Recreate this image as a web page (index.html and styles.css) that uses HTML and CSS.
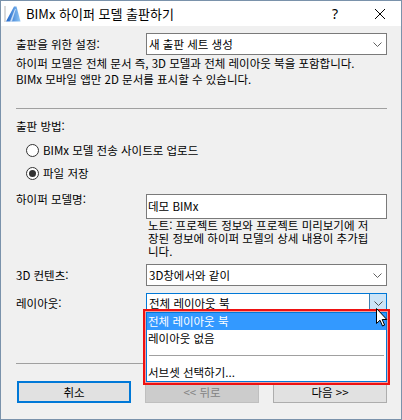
FILE: index.html
```html
<!DOCTYPE html>
<html lang="ko">
<head>
<meta charset="utf-8">
<title>BIMx 하이퍼 모델 출판하기</title>
<link rel="stylesheet" href="styles.css">
</head>
<body>
<div class="window">
  <div class="titlebar">
    <svg class="app-icon" viewBox="0 0 17 16" width="17" height="16">
      <defs>
        <linearGradient id="sail" x1="0" y1="0" x2="1" y2="0">
          <stop offset="0" stop-color="#1c63c9"/>
          <stop offset="1" stop-color="#8fc6f4"/>
        </linearGradient>
      </defs>
      <rect x="0" y="0" width="2" height="16" fill="#d9d9d9"/>
      <path d="M2 15.5 L10 0.5 L12.5 0.5 L16.5 15.5 Z" fill="url(#sail)"/>
      <path d="M6 15.5 L11 3 L11.8 3 L8 15.5 Z" fill="#ffffff" opacity="0.7"/>
    </svg>
    <span class="title">BIMx 하이퍼 모델 출판하기</span>
    <span class="help">?</span>
    <svg class="close" viewBox="0 0 10 10" width="10" height="10">
      <path d="M0 0 L10 10 M10 0 L0 10" stroke="#000" stroke-width="1" fill="none"/>
    </svg>
  </div>

  <div class="body">
    <div class="row row-setting">
      <span class="lbl">출판을 위한 설정:</span>
      <div class="combo">
        <span class="value">새 출판 세트 생성</span>
        <svg class="chev" viewBox="0 0 9 5" width="9" height="5"><path d="M0.5 0.5 L4.5 4.5 L8.5 0.5" stroke="#606060" fill="none"/></svg>
      </div>
    </div>

    <p class="desc">하이퍼 모델은 전체 문서 즉, 3D 모델과 전체 레이아웃 북을 포함합니다.<br>BIMx 모바일 앱만 2D 문서를 표시할 수 있습니다.</p>

    <div class="sep sep-top"></div>

    <div class="group-title">출판 방법:</div>
    <div class="radio radio-first"><span class="circle"></span>BIMx 모델 전송 사이트로 업로드</div>
    <div class="radio radio-second"><span class="circle checked"><span class="dot"></span></span>파일 저장</div>

    <div class="row row-name">
      <span class="lbl lbl-top">하이퍼 모델명:</span>
      <div class="field">
        <div class="input">데모 BIMx</div>
        <p class="note">노트: 프로젝트 정보와 프로젝트 미리보기에 저<br>장된 정보에 하이퍼 모델의 상세 내용이 추가됩<br>니다.</p>
      </div>
    </div>

    <div class="row row-3d">
      <span class="lbl">3D 컨텐츠:</span>
      <div class="combo">
        <span class="value">3D창에서와 같이</span>
        <svg class="chev" viewBox="0 0 9 5" width="9" height="5"><path d="M0.5 0.5 L4.5 4.5 L8.5 0.5" stroke="#606060" fill="none"/></svg>
      </div>
    </div>

    <div class="row row-layout">
      <span class="lbl">레이아웃:</span>
      <div class="combo combo-open">
        <span class="value">전체 레이아웃 북</span>
        <span class="chev-cell">
          <svg class="chev" viewBox="0 0 9 5" width="9" height="5"><path d="M0.5 0.5 L4.5 4.5 L8.5 0.5" stroke="#505050" fill="none"/></svg>
        </span>
        <div class="droplist">
          <div class="item selected">전체 레이아웃 북</div>
          <div class="item">레이아웃 없음</div>
          <div class="item item-sep"><span class="line"></span></div>
          <div class="item">서브셋 선택하기...</div>
        </div>
      </div>
    </div>

    <div class="sep sep-bottom"></div>

    <div class="buttons">
      <div class="btn btn-default">취소</div>
      <div class="btn btn-disabled">&lt;&lt; 뒤로</div>
      <div class="btn">다음 &gt;&gt;</div>
    </div>
  </div>

  <svg class="cursor" viewBox="0 0 12 19" width="12" height="19">
    <path d="M0.5 0.5 V15.5 L4 12.2 L6.5 18 L8.6 17.1 L6.2 11.5 H10.8 Z" fill="#fff" stroke="#000" stroke-width="1" stroke-linejoin="miter"/>
  </svg>
</div>
</body>
</html>
```

FILE: styles.css
```css
html, body {
  margin: 0;
  padding: 0;
  background: #f0f0f0;
}

.window {
  position: relative;
  width: 402px;
  height: 420px;
  box-sizing: border-box;
  border: 1px solid #7a92ab;
  background: #f0f0f0;
  font-family: "Noto Sans CJK KR", "Noto Sans", sans-serif;
  font-size: 11.5px;
  color: #000;
  overflow: hidden;
}

/* title bar */
.titlebar {
  height: 25px;
  background: #fff;
  display: flex;
  align-items: center;
}

.app-icon {
  margin-left: 3px;
  flex: none;
}

.title {
  margin-left: 5px;
  font-size: 13px;
  line-height: 25px;
}

.help {
  margin-left: auto;
  font-size: 14px;
  line-height: 25px;
  font-family: "Noto Sans", "Liberation Sans", sans-serif;
}

.close {
  margin-left: 37px;
  margin-right: 16px;
  flex: none;
}

/* body */
.body {
  padding: 0 14px 0 15px;
}

.row {
  display: grid;
  grid-template-columns: 130px 241px;
  align-items: center;
}

.lbl {
  line-height: 16px;
  white-space: nowrap;
}

.combo {
  position: relative;
  height: 22px;
  box-sizing: border-box;
  border: 1px solid #7a7a7a;
  background: #fff;
  display: flex;
  align-items: center;
  padding: 0 4px 0 2px;
  line-height: 16px;
}

.combo .value {
  flex: 1;
  white-space: nowrap;
}

.chev {
  display: block;
  flex: none;
}

.row-setting {
  margin-top: 7px;
}

.desc {
  margin: 0;
  line-height: 16px;
  white-space: nowrap;
}

.sep {
  height: 1px;
  background: #a0a0a0;
}

.sep-top {
  margin-top: 21px;
}

.group-title {
  margin-top: 9px;
  line-height: 16px;
}

.radio {
  display: flex;
  align-items: center;
  height: 16px;
  padding-left: 10px;
  white-space: nowrap;
}

.radio-first {
  margin-top: 8px;
}

.radio-second {
  margin-top: 7px;
}

.circle {
  width: 13px;
  height: 13px;
  box-sizing: border-box;
  border: 1px solid #333;
  border-radius: 50%;
  background: #fff;
  margin-right: 4px;
  display: grid;
  place-items: center;
  flex: none;
}

.dot {
  width: 7px;
  height: 7px;
  border-radius: 50%;
  background: #333;
}

.row-name {
  margin-top: 13px;
  align-items: start;
}

.lbl-top {
  margin-top: -3px;
}

.input {
  height: 25px;
  box-sizing: border-box;
  border: 1px solid #7a7a7a;
  background: #fff;
  padding-left: 1px;
  line-height: 23px;
  white-space: nowrap;
}

.note {
  margin: 0;
  padding-left: 2px;
  line-height: 13px;
  white-space: nowrap;
}

.row-3d {
  margin-top: 6px;
}

.row-layout {
  margin-top: 7px;
}

.combo-open {
  height: 20px;
  border-color: #0078d7;
  padding-right: 0;
  align-items: stretch;
}

.combo-open .value {
  display: flex;
  align-items: center;
}

.chev-cell {
  width: 16px;
  background: #cce4f7;
  border-left: 1px solid #3c7fb1;
  display: flex;
  align-items: center;
  justify-content: center;
}

.droplist {
  position: absolute;
  left: -1px;
  right: -1px;
  top: 100%;
  background: #fff;
  border: 1px solid #0078d7;
  box-shadow: 0 0 0 1px #f39a9a;
  outline: 2px solid #ee1111;
  outline-offset: 1px;
  z-index: 2;
}

.item {
  height: 17px;
  line-height: 17px;
  padding-left: 1px;
  white-space: nowrap;
}

.item.selected {
  background: #3399ff;
  color: #fff;
}

.item-sep {
  display: flex;
  align-items: center;
  padding: 0 2px 0 2px;
}

.item-sep .line {
  flex: 1;
  height: 1px;
  background: #a0a0a0;
}

.sep-bottom {
  margin-top: 50px;
}

.buttons {
  display: flex;
  justify-content: space-between;
  margin-top: 17px;
  padding-left: 1px;
}

.btn {
  width: 114px;
  height: 22px;
  box-sizing: border-box;
  border: 1px solid #adadad;
  background: #e1e1e1;
  display: flex;
  align-items: center;
  justify-content: center;
  white-space: nowrap;
}

.btn-default {
  border: 2px solid #0078d7;
}

.btn-disabled {
  background: #cccccc;
  border-color: #bfbfbf;
  color: #838383;
}

.cursor {
  position: absolute;
  left: 375px;
  top: 307px;
  z-index: 3;
}
```
